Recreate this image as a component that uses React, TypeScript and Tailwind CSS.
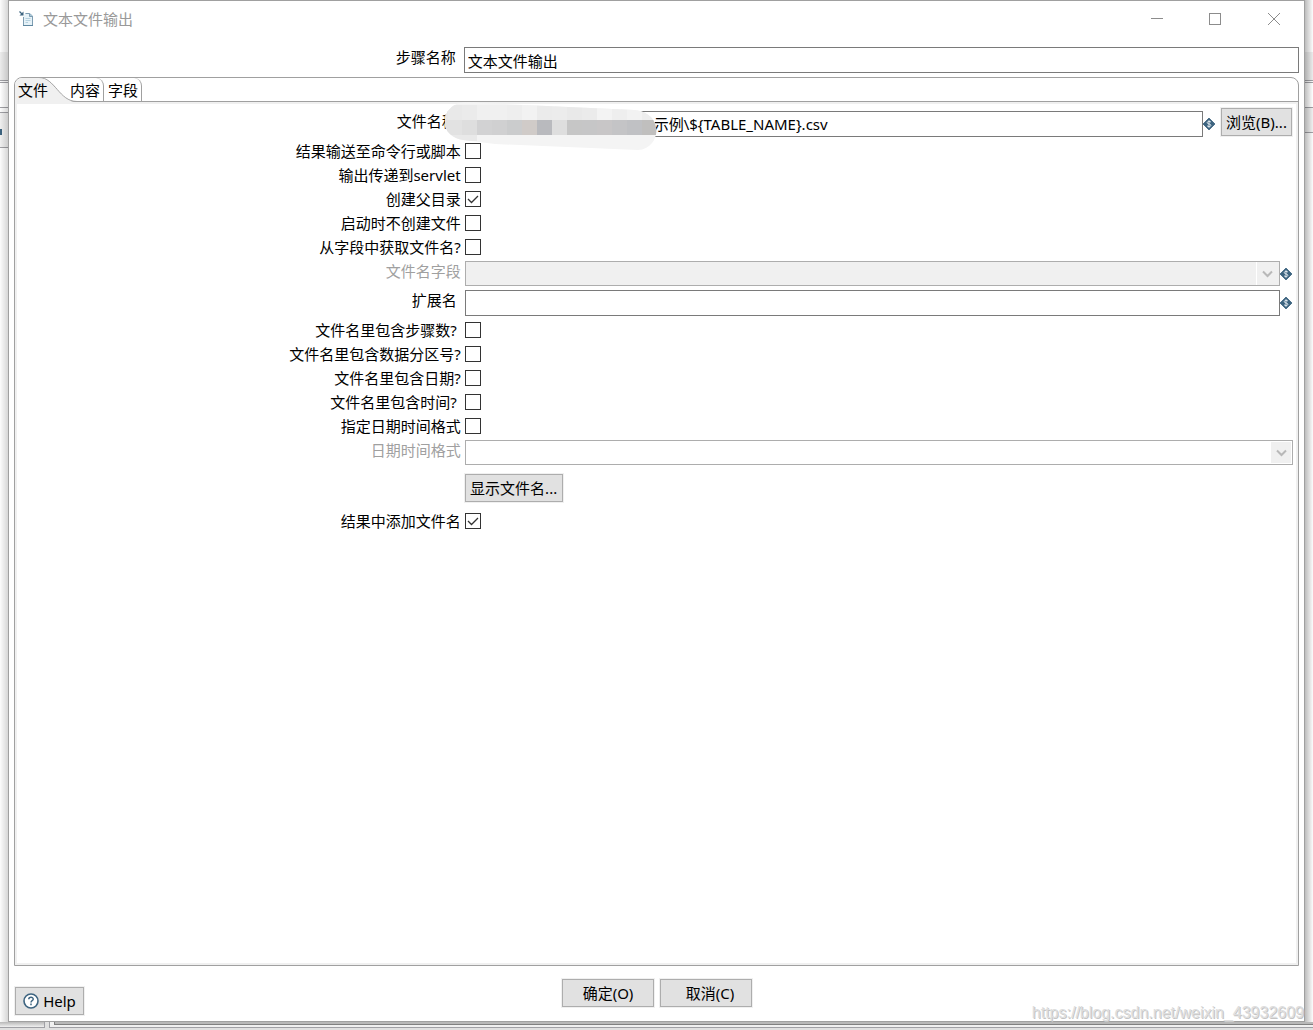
import { useState } from "react";
import type { ReactNode } from "react";

type FlagKey =
  | "command"
  | "servlet"
  | "parentFolder"
  | "lazyOpen"
  | "fromField"
  | "stepNr"
  | "partNr"
  | "date"
  | "time"
  | "dateFormat"
  | "addToResult";

function OutputIcon() {
  return (
    <svg width="16" height="18" viewBox="0 0 16 18" fill="none">
      <path d="M4 7V16H14V6L10.5 3H6.5" fill="#e6f2f8" />
      <path d="M4.5 7V15.5H13.5V6L10.5 3.5H6.5" stroke="#7d9db2" />
      <path d="M4 15.5H14" stroke="#5f87a0" />
      <path d="M10.5 3.5V6.5H13.5" fill="#a9c8d8" stroke="#7d9db2" />
      <path d="M6.5 8.5H11.5M6.5 10.5H11.5M6.5 12.5H9" stroke="#b5d0de" />
      <path d="M0.5 1.5L3 4" stroke="#3d6480" strokeWidth="1.3" />
      <path d="M4.5 1.5V5.5H0.5Z" fill="#3d6480" />
    </svg>
  );
}

function VariableIcon() {
  return (
    <svg width="12" height="12" viewBox="0 0 12 12" className="shrink-0">
      <path d="M6 0L12 6L6 12L0 6Z" fill="#3d6480" stroke="#3d6480" strokeWidth="0.8" strokeLinejoin="round" />
      <path
        d="M8 4.2C7.4 3.2 4.2 3 4.2 4.7C4.2 6.3 7.9 5.6 7.9 7.3C7.9 9 4.6 8.8 4 7.7M6 2.2V9.8"
        fill="none"
        stroke="#dfe8ee"
        strokeWidth="1"
      />
    </svg>
  );
}

function Chevron() {
  return (
    <svg width="11" height="8" viewBox="0 0 11 8" fill="none">
      <path d="M1 1.5L5.5 6L10 1.5" stroke="#b8b8b8" strokeWidth="2" />
    </svg>
  );
}

const topCells = ["#e9e9e9", "#ebebeb", "#f0f0f0", "#f0f0f0", "#eeeeee", "#f2f2f2", "#ebebeb", "#ececec", "#e9e9e9", "#ebebeb", "#f3f3f3", "#eeeeee", "#f2f2f2", "#ededed", "#eeeeee"];
const midCells = ["#e2e2e2", "#dedede", "#d2d2d3", "#d0d0d1", "#cbcccd", "#d0cbc8", "#b9babe", "#dedede", "#c6c6c6", "#c6c6c7", "#c8c6c7", "#c4c4c6", "#c0c1c4", "#c0bfbe", "#cccccb"];

// Blurred-out part of the path
function Mosaic() {
  return (
    <svg
      width="214"
      height="50"
      viewBox="0 0 214 50"
      className="pointer-events-none absolute -left-5 -top-[9px]"
    >
      <clipPath id="smear">
        <path d="M14 1Q24 -1 36 1L190 8C219 11 217 46 193 48L50 42L18 38C-6 34 -6 8 14 1Z" />
      </clipPath>
      <g clipPath="url(#smear)">
        <rect width="214" height="50" fill="#f4f4f4" />
        {topCells.map((color, i) => (
          <rect key={i} x={i * 15 + 2} y="3" width="15" height="15" fill={color} />
        ))}
        {midCells.map((color, i) => (
          <rect key={i} x={i * 15 + 2} y="18" width="15" height="15" fill={color} />
        ))}
        <rect y="3" width="3" height="15" fill="#e6e6e6" />
        <rect y="18" width="3" height="15" fill="#e2e2e2" />
        <rect y="33" width="32" height="6" fill="#e9e9e9" />
      </g>
    </svg>
  );
}

function Row({
  id,
  label,
  height,
  labelTop,
  disabled,
  children,
}: {
  id: string;
  label: string;
  height: string;
  labelTop?: boolean;
  disabled?: boolean;
  children: ReactNode;
}) {
  return (
    <div className={`flex items-center ${height}`}>
      <label
        htmlFor={id}
        className={`w-[35%] shrink-0 whitespace-pre pr-1 text-right ${disabled ? "text-[#a0a0a0]" : ""} ${
          labelTop ? "self-start pt-[2px]" : ""
        }`}
      >
        {label}
      </label>
      {children}
    </div>
  );
}

function Check({
  id,
  checked,
  onChange,
}: {
  id: string;
  checked: boolean;
  onChange: () => void;
}) {
  return (
    <span className="relative flex size-4">
      <input
        id={id}
        type="checkbox"
        checked={checked}
        onChange={onChange}
        className="size-4 appearance-none border border-[#333] bg-white"
      />
      {checked && (
        <svg viewBox="0 0 16 16" fill="none" className="pointer-events-none absolute inset-0 size-4">
          <path d="M3 8L6.5 11.5L13 5" stroke="#333" strokeWidth="1.3" />
        </svg>
      )}
    </span>
  );
}

function Button({ className, children }: { className: string; children: ReactNode }) {
  return (
    <button
      type="button"
      className={`flex shrink-0 items-center justify-center whitespace-nowrap border border-[#adadad] bg-[#e1e1e1] outline outline-[#f0f0f0] ${className}`}
    >
      {children}
    </button>
  );
}

// Sliver of the application window that shows beside the dialog
function Backdrop({ side }: { side: "left" | "right" }) {
  const left = side === "left";
  return (
    <div className="relative flex w-2 shrink-0 flex-col bg-[#fcfcfc]">
      <div className="h-[52px]" />
      <div className="h-[29px] border-b border-[#a0a0a5] bg-[#ececec]" />
      <div className="mt-px h-[26px] border-y border-[#a0a0a5] bg-white" />
      {left ? (
        <div className="mt-1 flex h-9 items-center border-y border-[#a0a0a5] bg-[#f0f0f0] pt-1">
          <span className="h-[6px] w-[2px] bg-[#3d6480]" />
        </div>
      ) : (
        <div className="h-[25px] border-b border-[#a0a0a5] bg-[#f0f0f0]" />
      )}
      <div
        className={`absolute inset-0 to-transparent ${
          left ? "bg-linear-to-l from-black/15" : "bg-linear-to-r from-black/25"
        }`}
      />
    </div>
  );
}

const tabs = ["文件", "内容", "字段"];

export default function App() {
  const [stepName, setStepName] = useState("文本文件输出");
  const [fileName, setFileName] = useState("示例\\${TABLE_NAME}.csv");
  const [extension, setExtension] = useState("");
  const [flags, setFlags] = useState<Record<FlagKey, boolean>>({
    command: false,
    servlet: false,
    parentFolder: true,
    lazyOpen: false,
    fromField: false,
    stepNr: false,
    partNr: false,
    date: false,
    time: false,
    dateFormat: false,
    addToResult: true,
  });

  const flagRow = (key: FlagKey, label: string) => (
    <Row key={key} id={key} label={label} height="h-6">
      <Check
        id={key}
        checked={flags[key]}
        onChange={() => setFlags((prev) => ({ ...prev, [key]: !prev[key] }))}
      />
    </Row>
  );

  return (
    <div className="flex min-h-screen flex-col bg-[#f0f0f0] font-['Noto_Sans','Noto_Sans_CJK_SC',sans-serif] text-[15px] leading-5 text-black">
      <div className="flex flex-1">
        <Backdrop side="left" />

        <main className="relative flex min-w-0 flex-1 flex-col border border-[#a0a0a0] bg-white">
          {/* Title bar */}
          <header className="flex h-9 items-center pl-[10px] text-[#999]">
            <OutputIcon />
            <h1 className="ml-2 flex-1">文本文件输出</h1>
            <button type="button" aria-label="最小化" className="flex w-[58px] justify-center">
              <svg width="12" height="12" fill="none" stroke="#8c8c8c">
                <path d="M0 5.5H12" />
              </svg>
            </button>
            <button type="button" aria-label="最大化" className="flex w-[58px] justify-center">
              <svg width="12" height="12" fill="none" stroke="#8c8c8c">
                <rect x="0.5" y="0.5" width="11" height="11" />
              </svg>
            </button>
            <button type="button" aria-label="关闭" className="flex w-[60px] justify-center">
              <svg width="12" height="12" fill="none" stroke="#8c8c8c">
                <path d="M0 0L12 12M12 0L0 12" />
              </svg>
            </button>
          </header>

          <div className="flex flex-1 flex-col px-[5px]">
            <div className="flex h-10 items-start pt-[10px]">
              <label htmlFor="stepName" className="w-[35%] shrink-0 pr-2 text-right">
                步骤名称
              </label>
              <input
                id="stepName"
                value={stepName}
                onChange={(e) => setStepName(e.target.value)}
                className="h-[26px] min-w-0 flex-1 border border-[#7a7a7a] px-[3px]"
              />
            </div>

            {/* Tab folder */}
            <section className="flex flex-1 flex-col rounded-t-lg border border-[#a0a0a0]">
              <div role="tablist" className="relative flex h-6 border-b border-[#a0a0a0]">
                <svg width="64" height="24" className="absolute left-0 top-0" fill="none">
                  <path d="M0 24V7Q1 0 8 0H24C40 0 44 24 62 24Z" fill="#f0f0f0" />
                  <path d="M24 -0.5C40 -0.5 44 23.5 62 23.5" stroke="#a0a0a0" />
                </svg>
                {tabs.map((tab, i) => (
                  <button
                    key={tab}
                    type="button"
                    role="tab"
                    aria-selected={i === 0}
                    className={`relative ${
                      i === 0 ? "w-[51px] pl-[3px] text-left" : "rounded-tr-lg border-r border-[#a0a0a0] pl-1 pr-[3px]"
                    }`}
                  >
                    {tab}
                  </button>
                ))}
              </div>

              <div role="tabpanel" className="flex-1 border-2 border-[#f0f0f0]">
                <div className="relative flex h-[35px] items-end pb-[2px]">
                  <label htmlFor="fileName" className="w-[35%] shrink-0 self-center whitespace-pre pr-1 text-right">
                    {"文件名称 "}
                  </label>
                  <div className="relative flex min-w-0 flex-1 items-center">
                    <input
                      id="fileName"
                      value={fileName}
                      onChange={(e) => setFileName(e.target.value)}
                      className="h-[26px] min-w-0 flex-1 border border-[#7a7a7a] pb-[2px] pl-[188px]"
                    />
                    <VariableIcon />
                    <Mosaic />
                  </div>
                  <Button className="mb-px ml-[6px] mr-1 h-7 w-[71px]">浏览(B)...</Button>
                </div>

                {flagRow("command", "结果输送至命令行或脚本")}
                {flagRow("servlet", "输出传递到servlet")}
                {flagRow("parentFolder", "创建父目录")}
                {flagRow("lazyOpen", "启动时不创建文件")}
                {flagRow("fromField", "从字段中获取文件名?")}

                <Row id="fileNameField" label="文件名字段" height="h-[29px]" labelTop disabled>
                  <div className="relative flex min-w-0 flex-1 items-center pr-1">
                    <select
                      id="fileNameField"
                      disabled
                      className="h-[25px] min-w-0 flex-1 appearance-none border border-[#adadad] bg-[#f0f0f0] opacity-100"
                    />
                    <span className="pointer-events-none absolute right-[18px] flex h-[23px] w-[22px] items-center justify-center border-l border-white">
                      <Chevron />
                    </span>
                    <VariableIcon />
                  </div>
                </Row>
                <Row id="extension" label="扩展名 " height="h-[30px]" labelTop>
                  <div className="flex min-w-0 flex-1 items-center pr-1">
                    <input
                      id="extension"
                      value={extension}
                      onChange={(e) => setExtension(e.target.value)}
                      className="h-[26px] min-w-0 flex-1 border border-[#7a7a7a] px-1"
                    />
                    <VariableIcon />
                  </div>
                </Row>

                {flagRow("stepNr", "文件名里包含步骤数? ")}
                {flagRow("partNr", "文件名里包含数据分区号?")}
                {flagRow("date", "文件名里包含日期?")}
                {flagRow("time", "文件名里包含时间? ")}
                {flagRow("dateFormat", "指定日期时间格式")}

                <Row id="dateTimeFormat" label="日期时间格式" height="h-[29px]" labelTop disabled>
                  <div className="relative mr-[3px] flex min-w-0 flex-1 items-center">
                    <select
                      id="dateTimeFormat"
                      disabled
                      className="h-[25px] min-w-0 flex-1 appearance-none border border-[#adadad] bg-white opacity-100"
                    />
                    <span className="pointer-events-none absolute right-[2px] flex h-[21px] w-5 items-center justify-center bg-[#f0f0f0]">
                      <Chevron />
                    </span>
                  </div>
                </Row>

                <div className="flex h-[42px] items-center pl-[35%]">
                  <Button className="h-7 w-[98px]">显示文件名...</Button>
                </div>
                {flagRow("addToResult", "结果中添加文件名")}
              </div>
            </section>

            <footer className="grid h-[55px] grid-cols-[1fr_auto_1fr] items-start pl-px">
              <Button className="mt-[21px] h-7 w-[69px] gap-1">
                <svg width="16" height="16" viewBox="0 0 16 16" fill="none" stroke="#3d6480">
                  <circle cx="8" cy="8" r="7" fill="#fff" strokeWidth="1.6" />
                  <path d="M5.8 6.3C5.8 3.6 10.3 3.7 10.2 6.2C10.1 7.7 8 7.6 8 9.4M8 10.6V12.2" strokeWidth="1.5" />
                </svg>
                Help
              </Button>
              <div className="mt-[13px] flex gap-[6px]">
                <Button className="h-7 w-[92px]">确定(O)</Button>
                <Button className="h-7 w-[92px] pl-2">取消(C)</Button>
              </div>
            </footer>
          </div>

          <p className="pointer-events-none absolute bottom-0 right-0 font-['Liberation_Sans',sans-serif] text-base leading-4 text-[#dedede] text-shadow-[1px_1px_0_#c4c4c4]">
            https://blog.csdn.net/weixin_43932609
          </p>
        </main>

        <Backdrop side="right" />
      </div>

      {/* Lower edge of the window behind */}
      <div className="flex h-2 gap-1 bg-[#e0e0e0]">
        <div className="h-[6px] w-[45px] border-b border-r border-[#a0a0a5] bg-linear-to-b from-[#b8b8b8] to-[#f0f0f0]" />
        <div className="h-[6px] flex-1 border-b border-l border-[#a0a0a5] bg-[#f0f0f0] pl-1">
          <div className="h-[3px] border-b border-l border-[#808080] bg-[#b8b8b8]" />
        </div>
      </div>
    </div>
  );
}
